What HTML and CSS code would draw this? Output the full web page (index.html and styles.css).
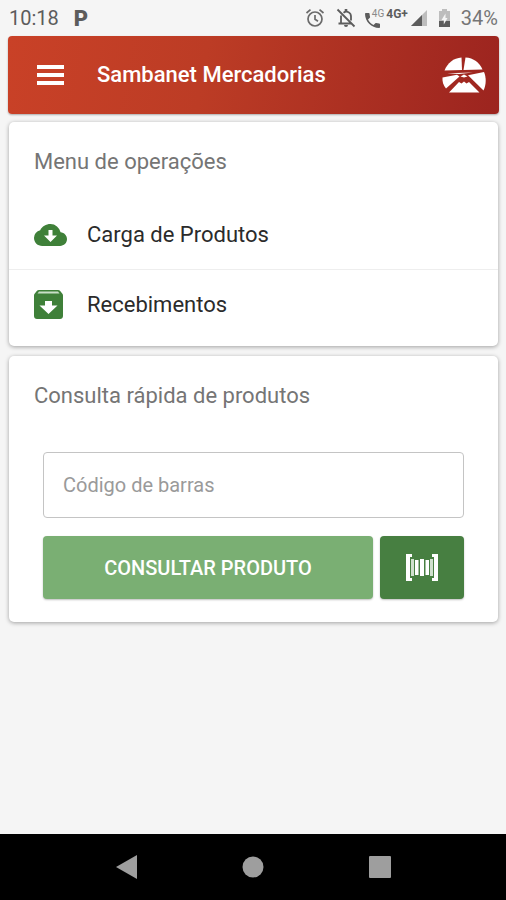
FILE: index.html
```html
<!doctype html>
<html lang="pt-BR">
    <head>
        <meta charset="UTF-8" />
        <meta name="viewport" content="width=device-width, initial-scale=1.0" />
        <title>Sambanet Mercadorias</title>
        <link rel="stylesheet" href="styles.css">
    </head>
    <body>
        <div class="status-bar">
            <span class="clock">10:18</span>
            <span class="app-mark">P</span>
            <div class="status-icons">
                <!-- alarm -->
                <svg class="alarm" width="20" height="20" viewBox="0 0 20 20">
                    <g fill="none" stroke="#6b6b6b" stroke-width="1.7">
                        <circle cx="10" cy="11" r="7" />
                        <path d="M10 7v4.300l3 2M1.500 5l4-3.300M18.500 5l-4-3.300" />
                    </g>
                </svg>
                <!-- notifications off -->
                <svg class="bell" width="20" height="20" viewBox="0 0 20 20">
                    <g fill="none" stroke="#5c5c5c" stroke-width="1.800">
                        <path d="M1.500 1.500l17 17M5 7.500v7M2.500 15.500h12.500M7.500 4.800c3.500-2.500 7.500-.3 7.500 3.700v4" />
                    </g>
                    <path fill="#5c5c5c" d="M8.700 1h2.600v3H8.700zM8 17h4a2 2 0 0 1-4 0z" />
                </svg>
                <svg class="phone" width="15" height="15" viewBox="3 3 18 18">
                    <path fill="#5c5c5c" d="M6.620 10.790c1.440 2.830 3.760 5.140 6.590 6.590l2.200-2.200c.27-.27.67-.36 1.020-.24 1.120.37 2.330.57 3.570.57.55 0 1 .45 1 1V20c0 .55-.45 1-1 1-9.390 0-17-7.610-17-17 0-.55.45-1 1-1h3.500c.55 0 1 .45 1 1 0 1.250.2 2.450.57 3.570.11.35.03.74-.25 1.020z" />
                </svg>
                <span class="net-small">4G</span>
                <span class="net">4G+</span>
                <svg class="signal" width="16" height="16" viewBox="0 0 16 16">
                    <path fill="#bdbdbd" d="M0 16L16 0v16z" />
                    <path fill="#5c5c5c" d="M0 16L11 5v11z" />
                </svg>
                <svg class="battery" width="11" height="18" viewBox="0 0 11 18">
                    <path fill="#bdbdbd" d="M3 0h5v2h3v16H0V2h3z" />
                    <path fill="#5c5c5c" d="M0 12h11v6H0z" />
                    <path fill="#f5f5f5" d="M6.500 4.500L2.500 11h2.300v4.500L8.500 9H6.500z" />
                </svg>
                <span class="percent">34%</span>
            </div>
        </div>

        <header>
            <button class="menu-button" type="button" aria-label="Abrir menu">
                <svg width="27" height="20" viewBox="0 0 27 20">
                    <path fill="#fff" d="M0 0h27v4H0zM0 8h27v4H0zM0 16h27v4H0z" />
                </svg>
            </button>
            <h1>Sambanet Mercadorias</h1>
            <svg class="logo" width="44" height="36" viewBox="0 0 44 36">
                <g fill="#fff">
                    <path d="M2.500 13.500C5.500 6 11.500 1 19.500.500L20 13z" />
                    <path d="M23.500.500C31.500 1 37.500 5.500 40.500 12.500L21.500 13z" />
                    <path d="M.5 20.500L15 17.800l2.500 1.700L4 31.500C1.300 28.500.2 24.500.5 20.500z" />
                    <path d="M5 16.200l26-.700L17 17z" />
                    <path d="M26 18.200l16-3.200c2.500 6 2.200 13-.5 18.500z" />
                    <path d="M18.500 19.500l3.500-2 3.500 2-3.500 1z" />
                    <path d="M7 35.500L17 25l2.500 1.500L22 24.500l2.500 2L27 25l10.500 10.500z" />
                </g>
            </svg>
        </header>

        <main>
            <section class="card menu-card">
                <h2>Menu de operações</h2>
                <ul class="operations">
                    <li>
                        <a href="#carga">
                            <span class="item-icon">
                                <svg width="33" height="22" viewBox="0 0 33 22">
                                    <path fill="#3f8039" d="M26.600 8.300A10.500 10.500 0 0 0 16.500 0C12 0 8 2.400 6.200 6.200A7.900 7.900 0 0 0 0 14c0 4.400 3.700 8 8.200 8h17.900c3.800 0 6.900-3 6.900-6.900 0-3.600-2.800-6.500-6.400-6.800z" />
                                    <path fill="#fff" d="M14.500 6h4v5.500H23L16.500 18 10 11.500h4.500z" />
                                </svg>
                            </span>
                            Carga de Produtos
                        </a>
                    </li>
                    <li>
                        <a href="#recebimentos">
                            <span class="item-icon">
                                <svg width="29" height="29" viewBox="0 0 29 29">
                                    <path fill="#3f8039" d="M5 0h19c1 0 1.700.4 2.200 1.100l2.200 2.700c.4.500.6 1.100.6 1.800V26c0 1.700-1.300 3-3 3H3c-1.700 0-3-1.300-3-3V5.600c0-.7.200-1.300.6-1.800l2.200-2.700C3.300.4 4 0 5 0z" />
                                    <path fill="#c9dfc7" d="M5 1.500h19L25.500 3.500h-22z" />
                                    <path fill="#fff" d="M11 11h7v4.500h5.500L14.500 24 5.500 15.500H11z" />
                                </svg>
                            </span>
                            Recebimentos
                        </a>
                    </li>
                </ul>
            </section>

            <section class="card query-card">
                <h2>Consulta rápida de produtos</h2>
                <form>
                    <input type="text" id="barcode" placeholder="Código de barras" aria-label="Código de barras" />
                    <div class="actions">
                        <button class="submit" type="submit">CONSULTAR PRODUTO</button>
                        <button class="scan" type="button" aria-label="Ler código de barras">
                            <svg width="32" height="27" viewBox="0 0 32 27">
                                <path fill="#fff" d="M0 0h6v3H4v21h2v3H0zM32 0h-6v3h2v21h-2v3h6z" />
                                <path fill="#cfe0cd" d="M5 5h3v17H5zM24 5h3v17h-3z" />
                                <path fill="#fff" d="M9 6h3.500v15H9zM14 5h4v17h-4zM19.500 6H23v15h-3.500z" />
                            </svg>
                        </button>
                    </div>
                </form>
            </section>
        </main>

        <nav>
            <button type="button" aria-label="Voltar">
                <svg width="22" height="24" viewBox="0 0 22 24">
                    <path fill="#9e9e9e" d="M21 0v24L0 12z" />
                </svg>
            </button>
            <button type="button" aria-label="Início">
                <svg width="22" height="24" viewBox="0 0 22 24">
                    <circle cx="11" cy="12" r="10.500" fill="#9e9e9e" />
                </svg>
            </button>
            <button type="button" aria-label="Recentes">
                <svg width="22" height="24" viewBox="0 0 22 24">
                    <rect y="1" width="22" height="22" rx="1" fill="#9e9e9e" />
                </svg>
            </button>
        </nav>
    </body>
</html>
```
FILE: styles.css
```css
* {
    box-sizing: border-box;
}
body {
    font-family: Roboto, "Liberation Sans", sans-serif;
    background: #f5f5f5;
    color: #2b2b2b;
    margin: 0;
    min-height: 100vh;
    display: flex;
    flex-direction: column;
}
svg {
    display: block;
    flex: none;
}
button {
    font-family: inherit;
    border: none;
    padding: 0;
    cursor: pointer;
    display: flex;
    align-items: center;
    justify-content: center;
}

/* Status bar */
.status-bar {
    height: 36px;
    padding: 0 8px 0 9px;
    display: flex;
    align-items: center;
    color: #5c5c5c;
    font-size: 20px;
}
.app-mark {
    margin-left: 15px;
    font-weight: 900;
    font-size: 22px;
}
.status-icons {
    margin-left: auto;
    display: flex;
    align-items: center;
}
.bell {
    margin: 0 9px 0 11px;
}
.phone {
    margin-top: 4px;
}
.net-small,
.net {
    line-height: 12px;
    padding-bottom: 9px;
}
.net-small {
    margin-left: -8px;
    font-size: 10px;
    color: #8a8a8a;
}
.net {
    margin: 0 3px 0 2px;
    font-size: 12px;
    font-weight: 700;
}
.battery {
    margin: 0 11px 0 12px;
}
.percent {
    color: #757575;
}

/* Title bar */
header {
    height: 78px;
    margin: 0 7px 0 8px;
    padding: 0 13px 0 29px;
    display: flex;
    align-items: center;
    background: linear-gradient(100deg, #c94127, #bc3c25 40%, #9c241f);
    border-radius: 4px;
    box-shadow: 0 1px 2px rgba(0, 0, 0, 0.3);
}
.menu-button {
    background: none;
}
header h1 {
    margin: 0 auto 0 33px;
    font-size: 22px;
    line-height: 28px;
    font-weight: 500;
    color: #fff;
}

/* Cards */
main {
    flex: 1;
    padding: 8px 8px 16px 9px;
}
.card {
    background: #fff;
    border-radius: 5px;
    box-shadow: 0 1px 4px rgba(0, 0, 0, 0.35);
}
.card + .card {
    margin-top: 10px;
}
.card h2 {
    margin: 0;
    padding: 24px 25px 0;
    font-size: 22px;
    line-height: 32px;
    font-weight: 400;
    color: #757575;
}
.operations {
    list-style: none;
    margin: 0;
    padding: 22px 0 7px;
}
.operations li + li {
    border-top: 1px solid #eee;
}
.operations a {
    height: 69px;
    padding-left: 25px;
    display: flex;
    align-items: center;
    font-size: 22px;
    color: #2b2b2b;
    text-decoration: none;
}
.item-icon {
    width: 53px;
}

/* Quick search */
form {
    padding: 40px 34px 23px;
}
input {
    display: block;
    width: 100%;
    height: 66px;
    padding: 0 19px;
    font-family: inherit;
    font-size: 20px;
    color: #2b2b2b;
    background: #fff;
    border: 1px solid #c4c4c4;
    border-radius: 4px;
}
input::placeholder {
    color: #9a9a9a;
}
.actions {
    display: flex;
    gap: 7px;
    margin-top: 18px;
}
.actions button {
    height: 63px;
    color: #fff;
    border-radius: 4px;
    box-shadow: 0 1px 2px rgba(0, 0, 0, 0.25);
}
.submit {
    flex: 1;
    font-size: 20px;
    font-weight: 500;
    background: #7aaf73;
}
.scan {
    width: 84px;
    background: #477f41;
}

/* System navigation */
nav {
    height: 66px;
    padding: 0 12.5%;
    display: flex;
    background: #000;
}
nav button {
    flex: 1;
    background: none;
}
```
